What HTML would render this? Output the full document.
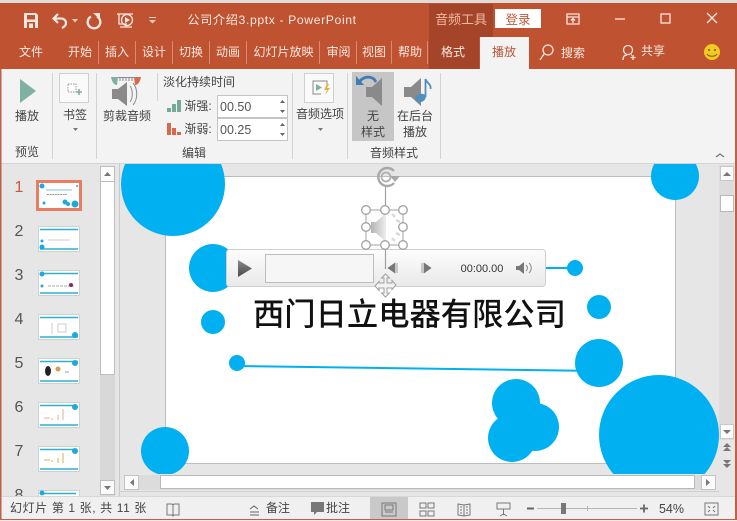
<!DOCTYPE html>
<html><head><meta charset="utf-8"><style>
html,body{margin:0;padding:0;background:#e6e6e6;overflow:hidden}
svg{display:block;position:absolute;left:0;top:0}
text{font-family:"Liberation Sans","Noto Sans CJK SC",sans-serif;font-size:12px;fill:#444;text-anchor:middle}
.w text,text.w{fill:#fbe9e2}
.l{text-anchor:start}
.n{font-size:16px;fill:#555}
.ic{fill:none;stroke:#f7e6df;stroke-width:1.3}
.sep{stroke:#d2d2d2;stroke-width:1}
.tsep{stroke:#d98a70;stroke-width:1}
.btn{fill:#fafafa;stroke:#cfcfcf}
.h{fill:#fff;stroke:#a0a0a0;stroke-width:1.3}
</style></head><body>
<svg width="737" height="521" viewBox="0 0 737 521" xmlns="http://www.w3.org/2000/svg">
<defs>
<linearGradient id="pl" x1="0" y1="0" x2="0" y2="1"><stop offset="0" stop-color="#fdfdfd"/><stop offset="1" stop-color="#e9e9e9"/></linearGradient>
<linearGradient id="tr" x1="0" y1="0" x2="0" y2="1"><stop offset="0" stop-color="#8a8a8a"/><stop offset="1" stop-color="#4a4a4a"/></linearGradient>
<linearGradient id="sp" x1="0" y1="0" x2="1" y2="0"><stop offset="0" stop-color="#b4b4b4"/><stop offset="1" stop-color="#eeeeee"/></linearGradient>
<clipPath id="cv"><rect x="121" y="164" width="598" height="310"/></clipPath>
</defs>
<rect width="737" height="521" fill="#e6e6e6"/>
<!-- title bar -->
<rect x="0" y="0" width="737" height="3" fill="#e2dcd9"/>
<rect x="0" y="3" width="737" height="66" fill="#bf5230"/>
<rect x="429" y="4" width="64" height="33" fill="#a4452a"/>
<rect x="429" y="37" width="50" height="32" fill="#a4452a"/>
<rect x="480" y="37" width="49" height="32" fill="#f3f3f3"/>
<rect x="495" y="9" width="46" height="19" fill="#fff"/>
<text class="w" x="272" y="24" style="font-size:12.2px;letter-spacing:.62px">公司介绍3.pptx  -  PowerPoint</text>
<text x="461" y="24" style="fill:#f2b7a0;font-size:13px">音频工具</text>
<text x="518" y="24" style="fill:#c4583a;font-size:12.5px">登录</text>
<!-- QAT -->
<g>
<path d="M24 13h12l2 2v13H24z" fill="#f7e6df"/><rect x="27" y="15" width="8" height="4.500" fill="#bf5230"/><rect x="27" y="22" width="8" height="6" fill="#bf5230"/><rect x="29" y="23.500" width="4" height="4.500" fill="#f7e6df"/>
<path d="M58 14l-4.500 4.500L58 23" fill="none" stroke="#f7e6df" stroke-width="2.200"/><path d="M54 18.500h7c3 0 5 2 5 4.500s-2 4-4 5" fill="none" stroke="#f7e6df" stroke-width="2.200"/>
<path d="M72 19h6l-3 3.500z" fill="#f0cdbf"/>
<path d="M91 16.500a6.300 6.300 0 1 0 6 0" fill="none" stroke="#f7e6df" stroke-width="2.400"/><path d="M93 13h7v6.500z" fill="#f7e6df"/>
<path class="ic" d="M117 14h16M119 14v10h8"/><circle class="ic" cx="127" cy="20" r="5.500"/><path d="M125 17l5 3-5 3z" fill="#f7e6df"/><path class="ic" d="M120 27h12M126 25v2"/>
<path d="M149 17h7v1h-7zM149 20h7l-3.500 3.500z" fill="#f0cdbf"/>
</g>
<!-- window controls -->
<path class="ic" d="M567 14h12v10h-12zM567 17h12M573 23v-4M571 20.500l2-2 2 2"/>
<path class="ic" d="M615 19h10"/>
<rect class="ic" x="661" y="14" width="9" height="9"/>
<path class="ic" d="M707 13l10 10M717 13l-10 10"/>
<!-- tabs -->
<g class="w">
<text x="31" y="56">文件</text><text x="80" y="56">开始</text><text x="117" y="56">插入</text><text x="154" y="56">设计</text><text x="191" y="56">切换</text><text x="228" y="56">动画</text><text x="283.500" y="56">幻灯片放映</text><text x="338.500" y="56">审阅</text><text x="374" y="56">视图</text><text x="410" y="56">帮助</text><text x="453" y="56">格式</text><text x="573" y="57">搜索</text><text x="653" y="55">共享</text>
</g>
<text x="504" y="56" style="fill:#b9553a">播放</text>
<path class="tsep" d="M98.500 41v23M135.500 41v23M172.500 41v23M209.500 41v23M246.500 41v23M319.500 41v23M356.500 41v23M391.500 41v23M427.500 41v23"/>
<circle class="ic" cx="548" cy="50" r="5"/><path class="ic" d="M544 54l-4 6"/>
<circle class="ic" cx="628" cy="50" r="4.500"/><path class="ic" d="M623 60c0-4 2-5 4-5M631 55h1M633 55v5M630.500 57.500h5"/>
<circle cx="712" cy="52" r="8" fill="#f4c922"/><circle cx="709" cy="50" r="1" fill="#7a5a10"/><circle cx="715" cy="50" r="1" fill="#7a5a10"/><path d="M707 54c2 3 8 3 10 0" fill="none" stroke="#7a5a10"/>
<!-- ribbon -->
<rect x="1" y="69" width="735" height="95" fill="#f3f3f3"/>
<rect x="0" y="163" width="737" height="1" fill="#d4d4d4"/>
<path class="sep" d="M52.500 73v86M96.500 73v86M157.500 73v28M292.500 73v86M347.500 73v86M440.500 73v86"/>
<path d="M20 79l16 12-16 12z" fill="#7fb0a2"/>
<text x="27" y="120">播放</text><text x="27" y="156">预览</text>
<rect class="btn" x="59.500" y="73.500" width="29" height="29"/>
<path d="M68 84h8v8h-8z" fill="#fff" stroke="#9a9a9a" stroke-dasharray="1.500 1"/><path d="M76 92h6M79 89v6" stroke="#7fb0a2" stroke-width="1.600"/>
<text x="75" y="119">书签</text><path d="M73 128h5l-2.500 3z" fill="#777"/>
<!-- trim audio -->
<path d="M111 77h7l-1 8c-3 0-5-3-6-8z" fill="#7fb0a2"/><path d="M134 77h7c-1 5-3 8-6 8z" fill="#d9694c"/><path d="M118 77.500h16M120 78v3M123 78v3M126 78v3M129 78v3M132 78v3" stroke="#8a8a8a" fill="none"/>
<path d="M112 89h6l9-7v24l-9-7h-6z" fill="#8a8a8a"/><path d="M130 86c3 4 3 12 0 16M133 83c5 6 5 16 0 22" fill="none" stroke="#8a8a8a"/>
<text x="127" y="120">剪裁音频</text>
<text x="199" y="86">淡化持续时间</text>
<path d="M167 108h4v4h-4zM172 104h4v8h-4zM177 100h4v12h-4z" fill="#78a896"/>
<path d="M167 123h4v12h-4zM172 128h4v7h-4zM177 132h4v3h-4z" fill="#d9694c"/>
<text x="198" y="110">渐强:</text><text x="198" y="133">渐弱:</text>
<rect x="217.500" y="95.500" width="70" height="22" fill="#fff" stroke="#c4c4c4"/><rect x="217.500" y="118.500" width="70" height="22" fill="#fff" stroke="#c4c4c4"/>
<text class="l" x="220" y="111" style="font-size:12.500px;fill:#555">00.50</text><text class="l" x="220" y="134" style="font-size:12.500px;fill:#555">00.25</text>
<path d="M280 103l2.500-3 2.500 3zM280 110h5l-2.500 3zM280 126l2.500-3 2.500 3zM280 133h5l-2.500 3z" fill="#666"/>
<text x="194" y="157">编辑</text>
<rect class="btn" x="304.500" y="73.500" width="29" height="29"/>
<path d="M327 85v-4h-14v13h8" fill="none" stroke="#8a8a8a"/><path d="M316 84l6 3.500-6 3.500z" fill="#7fb0a2"/><path d="M327 84l-3 6h3l-2 5 5-7h-3l2-4z" fill="#e8b04a"/>
<text x="320" y="118">音频选项</text><path d="M318 128h5l-2.500 3z" fill="#777"/>
<rect x="352" y="72" width="42" height="69" fill="#c6c6c6"/>
<path d="M366 87h6l10-9v28l-10-9h-6z" fill="#8a8a8a"/>
<path d="M359 84c1-6 9-9 15-5l2 3" fill="none" stroke="#3f7cb3" stroke-width="2.800"/><path d="M356 76v9h8z" fill="#3f7cb3"/>
<text x="373" y="120">无</text><text x="373" y="136">样式</text>
<path d="M404 87h7l10-9v28l-10-9h-7z" fill="#8a8a8a"/>
<path d="M425.500 79v18" stroke="#4f8fc0" stroke-width="1.800"/><path d="M425.500 79c1 4 6 5 5 10" fill="none" stroke="#4f8fc0" stroke-width="1.800"/><ellipse cx="420.500" cy="98" rx="5.500" ry="4" fill="#4f8fc0" transform="rotate(-20 420.500 98)"/>
<text x="415" y="120">在后台</text><text x="415" y="136">播放</text>
<text x="394" y="157">音频样式</text>
<path d="M716 157l4-3 4 3" fill="none" stroke="#777" stroke-width="1.300"/>
<!-- thumb pane -->
<rect x="119" y="164" width="1" height="333" fill="#c9c9c9"/>
<text class="n" x="19" y="192" style="fill:#c9593c">1</text><text class="n" x="19" y="236">2</text><text class="n" x="19" y="280">3</text><text class="n" x="19" y="324">4</text><text class="n" x="19" y="368">5</text><text class="n" x="19" y="412">6</text><text class="n" x="19" y="456">7</text><text class="n" x="19" y="500">8</text>
<rect x="37.500" y="181.500" width="43" height="28" fill="#fff" stroke="#ea7d5f" stroke-width="3"/>
<circle cx="42" cy="186" r="2.500" fill="#1ea8e0"/><circle cx="75" cy="204" r="3.500" fill="#1ea8e0"/><circle cx="65" cy="202" r="2.500" fill="#1ea8e0"/><circle cx="68" cy="204" r="2" fill="#1ea8e0"/><circle cx="77" cy="186" r="1" fill="#1ea8e0"/><circle cx="44" cy="203" r="1.500" fill="#1ea8e0"/><path d="M46 190h26" stroke="#7cc6e0"/><path d="M47 194.500h20" stroke="#999" stroke-dasharray="2 .6"/>
<g>
<g><rect x="38.500" y="226.500" width="41" height="25" fill="#fff" stroke="#c9d4d8"/><path d="M40 229.500h38M40 249h38" stroke="#2fb0d0" stroke-width="1.500"/><circle cx="42" cy="247" r="2.500" fill="#1ea8e0"/><circle cx="42" cy="241" r="1.500" fill="#1ea8e0"/><path d="M48 240h22" stroke="#ccc"/></g>
<g><rect x="38.500" y="270.500" width="41" height="25" fill="#fff" stroke="#c9d4d8"/><path d="M40 273.500h38M40 293h38" stroke="#2fb0d0" stroke-width="1.500"/><circle cx="42" cy="274" r="2.500" fill="#1ea8e0"/><circle cx="42" cy="286" r="1.500" fill="#1ea8e0"/><path d="M48 286h26" stroke="#aaa" stroke-dasharray="3 1"/><circle cx="71" cy="285" r="2" fill="#8a2a60"/></g>
<g><rect x="38.500" y="314.500" width="41" height="25" fill="#fff" stroke="#c9d4d8"/><path d="M40 317.500h38M40 337h38" stroke="#2fb0d0" stroke-width="1.500"/><circle cx="75" cy="335" r="3" fill="#1ea8e0"/><path d="M52 323v11M58 324h8v8h-8z" stroke="#ccc" fill="none"/></g>
<g><rect x="38.500" y="358.500" width="41" height="25" fill="#fff" stroke="#c9d4d8"/><path d="M40 361.500h38M40 381h38" stroke="#2fb0d0" stroke-width="1.500"/><circle cx="75" cy="363" r="3" fill="#1ea8e0"/><ellipse cx="48" cy="371" rx="3" ry="5" fill="#222"/><circle cx="58" cy="369" r="2.500" fill="#d89a50"/><path d="M65 372h4" stroke="#8ac"/></g>
<g><rect x="38.500" y="402.500" width="41" height="25" fill="#fff" stroke="#c9d4d8"/><path d="M40 405.500h36M40 425h38" stroke="#2fb0d0" stroke-width="1.500"/><circle cx="75" cy="407" r="3" fill="#1ea8e0"/><path d="M44 418h6M52 418v2M58 415v5M63 409v11" stroke="#e0b088"/></g>
<g><rect x="38.500" y="446.500" width="41" height="25" fill="#fff" stroke="#c9d4d8"/><path d="M40 449.500h36M40 469h38" stroke="#2fb0d0" stroke-width="1.500"/><circle cx="75" cy="451" r="3" fill="#1ea8e0"/><path d="M44 460h6M52 460v2M58 458v5M63 453v10" stroke="#d8b060"/></g>
<g><rect x="38.500" y="490.500" width="41" height="8" fill="#fff" stroke="#c9d4d8"/><path d="M40 493.500h36" stroke="#2fb0d0" stroke-width="1.500"/><circle cx="42" cy="493" r="2.500" fill="#1ea8e0"/></g>
</g>
<rect x="100" y="166" width="15" height="330" fill="#d8d8d8"/>
<rect x="100.500" y="166.500" width="14" height="15" fill="#fbfbfb" stroke="#bdbdbd"/><rect x="100.500" y="181.500" width="14" height="193" fill="#fff" stroke="#bdbdbd"/><rect x="100.500" y="480.500" width="14" height="14" fill="#fbfbfb" stroke="#bdbdbd"/>
<path d="M104 176l3.500-4 3.500 4zM104 486h7l-3.500 4z" fill="#777"/>
<!-- canvas -->
<rect x="165.500" y="176.500" width="510" height="287" fill="#fff" stroke="#bdbdbd"/>
<g clip-path="url(#cv)" fill="#00b0f0">
<circle cx="173" cy="184" r="52"/><circle cx="675" cy="176" r="24"/><circle cx="213" cy="268" r="24"/><circle cx="213" cy="322" r="12"/><circle cx="237" cy="363" r="8"/><circle cx="575" cy="268" r="8"/><circle cx="599" cy="307" r="12"/><circle cx="599" cy="363" r="24"/><circle cx="516" cy="403" r="24"/><circle cx="535" cy="427" r="24"/><circle cx="512" cy="438" r="24"/><circle cx="659" cy="435" r="60"/><circle cx="165" cy="451" r="24"/>
<path d="M237 366L599 371M540 268H575" stroke="#00b0f0" stroke-width="2" fill="none"/>
</g>
<text x="409.500" y="325" style="font-size:31.300px;fill:#111;font-weight:500;font-family:'Noto Sans CJK SC','Liberation Sans',sans-serif">西门日立电器有限公司</text>
<!-- player -->
<rect x="226.500" y="249.500" width="319" height="37" rx="3" fill="url(#pl)" stroke="#cfcfcf"/>
<path d="M238 260l14 8.500-14 8.500z" fill="url(#tr)"/>
<rect x="265.500" y="254.500" width="108" height="28" fill="#f6f6f6" stroke="#bdbdbd"/>
<path d="M397 263v10M388 268l7-5v10z" fill="#777" stroke="#777" stroke-width=".7"/>
<path d="M422 263v10M431 268l-7-5v10z" fill="#777" stroke="#777" stroke-width=".7"/>
<text x="482" y="272" style="font-size:11px;fill:#333">00:00.00</text>
<path d="M516 266h3l5-4v12l-5-4h-3z" fill="#777"/><path d="M526 265c2 2 2 4 0 6M529 263c3 3 3 7 0 10" fill="none" stroke="#888"/>
<!-- selection -->
<path d="M385.500 186v19M385.500 245v24" stroke="#a0a0a0" stroke-width="1.200" fill="none"/>
<path d="M366 210h37v35h-37z" fill="none" stroke="#a0a0a0" stroke-width="1"/>
<path d="M371 222h5l10-9v29l-10-9h-5z" fill="url(#sp)"/><path d="M392 214l3 3M396 220l4 2M396 233l4 2M392 238l3 3" stroke="#dcdcdc" stroke-width="2.500" fill="none"/>
<circle class="h" cx="366" cy="210" r="4.300"/><circle class="h" cx="385" cy="210" r="4.300"/><circle class="h" cx="403" cy="210" r="4.300"/><circle class="h" cx="366" cy="227" r="4.300"/><circle class="h" cx="403" cy="227" r="4.300"/><circle class="h" cx="366" cy="245" r="4.300"/><circle class="h" cx="385" cy="245" r="4.300"/><circle class="h" cx="403" cy="245" r="4.300"/>
<path d="M394 183a9 9 0 1 1 0-12" fill="none" stroke="#a8a8a8" stroke-width="2.400"/><circle cx="386" cy="177" r="4.500" fill="none" stroke="#b0b0b0" stroke-width="1.800"/><path d="M390 176h10l-5 6z" fill="#a8a8a8"/>
<path d="M385.500 274l4 4h-2.500v5h5v-2.500l4 4.500-4 4.500V288h-5v5h2.500l-4 4-4-4h2.500v-5h-5v2.500l-4-4.500 4-4.500V283h5v-5h-2.500z" fill="#f2f2f2" stroke="#a0a0a0"/>
<!-- v scroll -->
<rect x="719" y="165" width="15" height="275" fill="#dcdcdc"/>
<rect x="720.500" y="166.500" width="13" height="14" fill="#fbfbfb" stroke="#c8c8c8"/><rect x="720.500" y="195.500" width="13" height="16" fill="#fff" stroke="#b8b8b8"/><rect x="720.500" y="424.500" width="13" height="14" fill="#fbfbfb" stroke="#c8c8c8"/>
<path d="M723 176l4-4 4 4zM723 430h8l-4 4z" fill="#777"/>
<path d="M723 447l4-4 4 4zM723 451l4-4 4 4zM723 460h8l-4 4zM723 464h8l-4 4z" fill="#777"/>
<!-- h scroll -->
<rect x="120" y="474" width="599" height="23" fill="#e6e6e6"/>
<rect x="138" y="475" width="563" height="15" fill="#dcdcdc"/>
<rect x="124.500" y="475.500" width="14" height="14" fill="#fbfbfb" stroke="#c4c4c4"/><rect x="160.500" y="475.500" width="534" height="13" fill="#fff" stroke="#b8b8b8"/><rect x="701.500" y="475.500" width="14" height="14" fill="#fbfbfb" stroke="#c4c4c4"/>
<path d="M134 479v7l-4-3.500zM706 479v7l4-3.500z" fill="#777"/>
<rect x="119" y="491" width="600" height="1" fill="#cfcfcf"/>
<!-- status -->
<rect x="1" y="497" width="735" height="22" fill="#f0f0f0"/>
<rect x="0" y="496" width="737" height="1" fill="#d8d8d8"/>
<text class="l" x="10" y="512" style="letter-spacing:.62px">幻灯片 第 1 张, 共 11 张</text>
<path d="M167 504h5l1 1 1-1h5v11h-5l-1 1-1-1h-5zM173 505v10" fill="none" stroke="#777"/>
<path d="M250 509l4-3 4 3M250 512h9M250 515h9" fill="none" stroke="#666"/>
<text x="278" y="512">备注</text>
<path d="M311 502h13v10h-7l-3 3v-3h-3z" fill="#777"/><text x="338" y="512">批注</text>
<rect x="370" y="497" width="38" height="22" fill="#c9c9c9"/>
<path d="M382 503h14v13h-14zM385 505h8v5h-8zM385 512h8" fill="none" stroke="#777"/>
<path d="M420 503h6v5h-6zM428 503h6v5h-6zM420 511h6v5h-6zM428 511h6v5h-6z" fill="none" stroke="#777"/>
<path d="M458 504l6 1 6-1v11l-6 1-6-1zM464 505v11M460 507h2M460 510h2M460 513h2M466 507h2M466 510h2M466 513h2" fill="none" stroke="#777"/>
<path d="M497 503h13v6h-13zM497 503h13M503.500 509v5M500 516l3.500-2 3.500 2" fill="none" stroke="#777"/>
<path d="M527 508.500h7" stroke="#666" stroke-width="2"/>
<path d="M537 508.500h100" stroke="#b5b5b5"/><path d="M587.500 506v5" stroke="#b5b5b5"/>
<rect x="561" y="503" width="5" height="11" fill="#777"/>
<path d="M640 508.500h8M644 504.500v8" stroke="#666" stroke-width="1.800"/>
<text x="671.500" y="513" style="font-size:12.500px">54%</text>
<path d="M705 503h13v12h-13zM708 506l2 2M715 506l-2 2M708 512l2-2M715 512l-2-2" fill="none" stroke="#777"/>
<!-- window border -->
<rect x="0" y="69" width="1.500" height="451" fill="#c0604a"/>
<rect x="735" y="69" width="2" height="451" fill="#c0604a"/>
<rect x="0" y="519" width="737" height="1.300" fill="#c0604a"/>
<rect x="0" y="520" width="737" height="1" fill="#ece8e6"/>
</svg>
</body></html>
